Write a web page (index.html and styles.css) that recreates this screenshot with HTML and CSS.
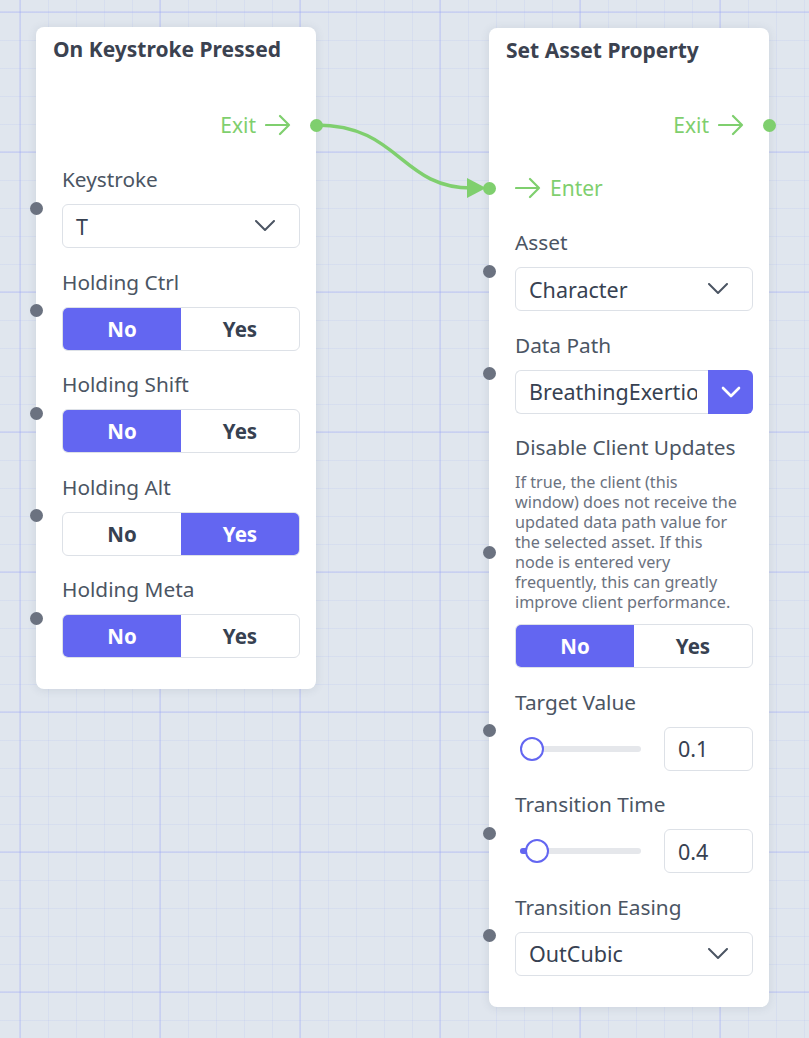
FILE: index.html
```html
<!DOCTYPE html>
<html lang="en">
<head>
    <meta charset="UTF-8">
    <meta name="viewport" content="width=device-width, initial-scale=1.0">
    <title>Node Graph</title>
    <link rel="stylesheet" href="styles.css">
</head>
<body>
    <div class="canvas">

        <!-- Connection between the two nodes -->
        <svg class="wires" width="809" height="1038" viewBox="0 0 809 1038">
            <path d="M316 125 C 400 125, 400 188, 472 188" fill="none" stroke="#7fcf6e" stroke-width="3.5" stroke-linecap="round"/>
            <polygon points="467,178 486,188 467,198" fill="#7fcf6e"/>
        </svg>

        <!-- Node: On Keystroke Pressed -->
        <div class="node node-keystroke">
            <h2 class="node-title">On Keystroke Pressed</h2>

            <div class="flow flow-out">
                <span>Exit</span>
                <svg class="arrow" width="26" height="22" viewBox="0 0 26 22"><path d="M1 11 H24 M15 2 L24 11 L15 20" fill="none" stroke="#7fcf6e" stroke-width="2.2" stroke-linecap="round" stroke-linejoin="round"/></svg>
                <i class="port port-out flow-port"></i>
            </div>

            <div class="fields">
                <div class="field">
                    <i class="port port-in"></i>
                    <label>Keystroke</label>
                    <div class="select">
                        <span>T</span>
                        <svg class="chev" width="20" height="12" viewBox="0 0 20 12"><path d="M1 1 L10 10 L19 1" fill="none" stroke="#4b5563" stroke-width="2" stroke-linecap="round" stroke-linejoin="round"/></svg>
                    </div>
                </div>

                <div class="field">
                    <i class="port port-in"></i>
                    <label>Holding Ctrl</label>
                    <div class="toggle">
                        <span class="on">No</span>
                        <span>Yes</span>
                    </div>
                </div>

                <div class="field">
                    <i class="port port-in"></i>
                    <label>Holding Shift</label>
                    <div class="toggle">
                        <span class="on">No</span>
                        <span>Yes</span>
                    </div>
                </div>

                <div class="field">
                    <i class="port port-in"></i>
                    <label>Holding Alt</label>
                    <div class="toggle">
                        <span>No</span>
                        <span class="on">Yes</span>
                    </div>
                </div>

                <div class="field">
                    <i class="port port-in"></i>
                    <label>Holding Meta</label>
                    <div class="toggle">
                        <span class="on">No</span>
                        <span>Yes</span>
                    </div>
                </div>
            </div>
        </div>

        <!-- Node: Set Asset Property -->
        <div class="node node-asset">
            <h2 class="node-title">Set Asset Property</h2>

            <div class="flow flow-out">
                <span>Exit</span>
                <svg class="arrow" width="26" height="22" viewBox="0 0 26 22"><path d="M1 11 H24 M15 2 L24 11 L15 20" fill="none" stroke="#7fcf6e" stroke-width="2.2" stroke-linecap="round" stroke-linejoin="round"/></svg>
                <i class="port port-out flow-port"></i>
            </div>

            <div class="flow flow-in">
                <i class="port port-in flow-port"></i>
                <svg class="arrow" width="26" height="22" viewBox="0 0 26 22"><path d="M1 11 H24 M15 2 L24 11 L15 20" fill="none" stroke="#7fcf6e" stroke-width="2.2" stroke-linecap="round" stroke-linejoin="round"/></svg>
                <span>Enter</span>
            </div>

            <div class="fields">
                <div class="field">
                    <i class="port port-in"></i>
                    <label>Asset</label>
                    <div class="select">
                        <span>Character</span>
                        <svg class="chev" width="20" height="12" viewBox="0 0 20 12"><path d="M1 1 L10 10 L19 1" fill="none" stroke="#4b5563" stroke-width="2" stroke-linecap="round" stroke-linejoin="round"/></svg>
                    </div>
                </div>

                <div class="field">
                    <i class="port port-in"></i>
                    <label>Data Path</label>
                    <div class="combo">
                        <div class="combo-text"><span>BreathingExertion</span></div>
                        <div class="combo-btn">
                            <svg width="20" height="12" viewBox="0 0 20 12"><path d="M2 2 L10 10 L18 2" fill="none" stroke="#fff" stroke-width="2.6" stroke-linecap="round" stroke-linejoin="round"/></svg>
                        </div>
                    </div>
                </div>

                <div class="field">
                    <i class="port port-in"></i>
                    <label>Disable Client Updates</label>
                    <p class="hint">If true, the client (this window) does not receive the updated data path value for the selected asset. If this node is entered very frequently, this can greatly improve client performance.</p>
                    <div class="toggle">
                        <span class="on">No</span>
                        <span>Yes</span>
                    </div>
                </div>

                <div class="field">
                    <i class="port port-in"></i>
                    <label>Target Value</label>
                    <div class="range-row">
                        <div class="slider">
                            <div class="track"></div>
                            <div class="thumb" style="left: 5px"></div>
                        </div>
                        <div class="number">0.1</div>
                    </div>
                </div>

                <div class="field">
                    <i class="port port-in"></i>
                    <label>Transition Time</label>
                    <div class="range-row">
                        <div class="slider">
                            <div class="track"><div class="fill" style="width: 12px"></div></div>
                            <div class="thumb" style="left: 10px"></div>
                        </div>
                        <div class="number">0.4</div>
                    </div>
                </div>

                <div class="field">
                    <i class="port port-in"></i>
                    <label>Transition Easing</label>
                    <div class="select">
                        <span>OutCubic</span>
                        <svg class="chev" width="20" height="12" viewBox="0 0 20 12"><path d="M1 1 L10 10 L19 1" fill="none" stroke="#4b5563" stroke-width="2" stroke-linecap="round" stroke-linejoin="round"/></svg>
                    </div>
                </div>
            </div>
        </div>

    </div>
</body>
</html>
```

FILE: styles.css
```css
* {
    box-sizing: border-box;
}
body {
    margin: 0;
    font-family: "Noto Sans", "Open Sans", sans-serif;
    color: #4b5563;
}
.canvas {
    position: relative;
    width: 809px;
    height: 1038px;
    overflow: hidden;
    background-color: #e0e6ee;
    background-image:
        linear-gradient(to right, rgba(150, 160, 245, 0.22) 2px, transparent 2px),
        linear-gradient(to bottom, rgba(150, 160, 245, 0.22) 2px, transparent 2px),
        linear-gradient(to right, rgba(160, 170, 245, 0.14) 1px, transparent 1px),
        linear-gradient(to bottom, rgba(160, 170, 245, 0.14) 1px, transparent 1px);
    background-size: 140px 100%, 100% 140px, 28px 100%, 100% 28px;
    background-position: 19px 0, 0 11px, 20px 0, 0 12px;
}
.wires {
    position: absolute;
    left: 0;
    top: 0;
    z-index: 2;
    pointer-events: none;
}

/* nodes */
.node {
    position: absolute;
    width: 280px;
    padding: 8px 16px 31px 26px;
    background: #fff;
    border-radius: 8px;
    box-shadow: 0 1px 10px rgba(60, 70, 100, 0.12);
}
.node-keystroke {
    left: 36px;
    top: 27px;
}
.node-asset {
    left: 489px;
    top: 28px;
}
.node-asset .flow-out {
    margin-top: 45px;
}
.node-title {
    margin: 0 0 0 -9px;
    font-size: 21px;
    line-height: 28px;
    font-weight: 700;
    color: #3b4250;
}

/* flow ports */
.flow {
    position: relative;
    display: flex;
    align-items: center;
    gap: 9px;
    height: 32px;
    color: #7fcf6e;
    font-size: 21px;
}
.flow-out {
    margin-top: 46px;
    justify-content: flex-end;
    padding-right: 9px;
}
.flow-in {
    margin-top: 31px;
}
.arrow {
    display: block;
}
.port {
    position: absolute;
    top: 50%;
    width: 13px;
    height: 13px;
    margin-top: -6.5px;
    border-radius: 50%;
    background: #6b7280;
}
.port-in {
    left: -32.5px;
}
.port-out {
    right: -22.5px;
}
.flow-port {
    background: #7fcf6e;
}

/* fields */
.fields {
    margin-top: 27px;
}
.field {
    position: relative;
    margin-bottom: 22.5px;
}
.field:last-child {
    margin-bottom: 0;
}
.field label {
    display: block;
    font-size: 20.8px;
    line-height: 22px;
    margin-bottom: 14px;
    color: #4b5563;
}
.hint {
    width: 228px;
    margin: 0 0 12px;
    font-size: 16.2px;
    line-height: 20px;
    color: #6b7280;
}
.select {
    display: flex;
    align-items: center;
    justify-content: space-between;
    height: 44px;
    padding: 0 24px 0 13px;
    border: 1px solid #dde1e7;
    border-radius: 6px;
    font-size: 21.5px;
    color: #374151;
}
.chev {
    display: block;
}
.combo {
    display: flex;
    height: 44px;
    font-size: 21.5px;
    color: #374151;
}
.combo-text {
    flex: 1;
    min-width: 0;
    display: flex;
    align-items: center;
    padding: 0 11px 0 13px;
    border: 1px solid #dde1e7;
    border-right: none;
    border-radius: 6px 0 0 6px;
}
.combo-text span {
    overflow: hidden;
    white-space: nowrap;
}
.combo-btn {
    width: 45px;
    display: flex;
    align-items: center;
    justify-content: center;
    background: #6366f1;
    border-radius: 0 6px 6px 0;
}
.toggle {
    display: flex;
    height: 44px;
    border: 1px solid #dde1e7;
    border-radius: 6px;
    overflow: hidden;
}
.toggle span {
    flex: 1;
    display: flex;
    align-items: center;
    justify-content: center;
    font-size: 20.5px;
    font-weight: 700;
    color: #374151;
}
.toggle span.on {
    background: #6366f1;
    color: #fff;
}

/* slider + number */
.range-row {
    display: flex;
    align-items: center;
    justify-content: space-between;
    height: 44px;
}
.slider {
    position: relative;
    width: 130px;
    height: 24px;
}
.track {
    position: absolute;
    left: 5px;
    right: 4px;
    top: 9px;
    height: 6px;
    border-radius: 3px;
    background: #e5e7eb;
    overflow: hidden;
}
.fill {
    height: 100%;
    background: #6366f1;
}
.thumb {
    position: absolute;
    top: 0;
    width: 24px;
    height: 24px;
    border: 2.5px solid #6366f1;
    border-radius: 50%;
    background: #fff;
}
.number {
    width: 89px;
    height: 44px;
    display: flex;
    align-items: center;
    padding: 0 13px;
    border: 1px solid #dde1e7;
    border-radius: 6px;
    font-size: 21.5px;
    color: #374151;
}
```
